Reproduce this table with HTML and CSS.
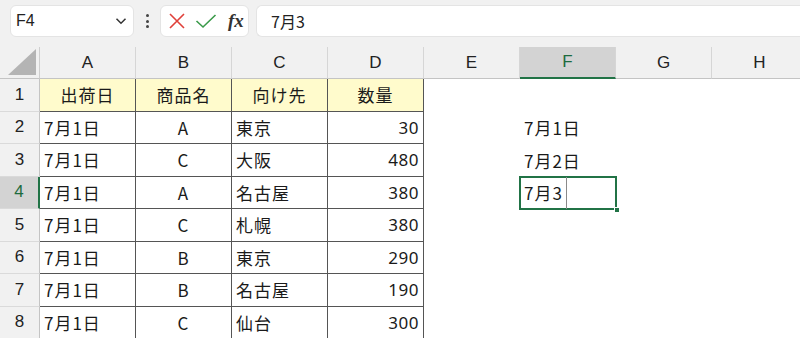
FILE: index.html
```html
<!DOCTYPE html>
<html lang="ja">
<head>
<meta charset="utf-8">
<title>Sheet1</title>
<link rel="stylesheet" href="styles.css">
</head>
<body>
<div class="app">
  <div class="toolbar">
    <div class="namebox">
      <span class="name">F4</span>
      <svg class="chev" width="12" height="8" viewBox="0 0 12 8"><path d="M1.5 1.8 L6 6.2 L10.5 1.8" fill="none" stroke="#333" stroke-width="1.5"/></svg>
    </div>
    <div class="grip"><i></i><i></i><i></i></div>
    <div class="fxbox">
      <svg class="ico" width="18" height="18" viewBox="0 0 18 18"><path d="M2 2 L16 16 M16 2 L2 16" stroke="#e0403a" stroke-width="1.6" fill="none"/></svg>
      <svg class="ico" width="22" height="18" viewBox="0 0 22 18"><path d="M1.5 9 L8 15 L20.5 3" stroke="#3a9a4a" stroke-width="1.6" fill="none"/></svg>
      <span class="fx">fx</span>
    </div>
    <div class="formula">7月3</div>
  </div>

  <div class="sheet">
    <div class="corner"><svg width="28" height="26" viewBox="0 0 28 26"><polygon points="28,0 28,26 0,26" fill="#b4b4b4"/></svg></div>
    <div class="colh">A</div><div class="colh">B</div><div class="colh">C</div><div class="colh">D</div>
    <div class="colh">E</div><div class="colh sel">F</div><div class="colh">G</div><div class="colh">H</div>

    <div class="rowh">1</div>
    <div class="c t head">出荷日</div><div class="c t head">商品名</div><div class="c t head">向け先</div><div class="c t head">数量</div>
    <div class="c"></div><div class="c"></div><div class="c"></div><div class="c"></div>

    <div class="rowh">2</div>
    <div class="c t">7月1日</div><div class="c t mid">A</div><div class="c t">東京</div><div class="c t num">30</div>
    <div class="c"></div><div class="c">7月1日</div><div class="c"></div><div class="c"></div>

    <div class="rowh">3</div>
    <div class="c t">7月1日</div><div class="c t mid">C</div><div class="c t">大阪</div><div class="c t num">480</div>
    <div class="c"></div><div class="c">7月2日</div><div class="c"></div><div class="c"></div>

    <div class="rowh sel">4</div>
    <div class="c t">7月1日</div><div class="c t mid">A</div><div class="c t">名古屋</div><div class="c t num">380</div>
    <div class="c"></div><div class="c active">7月3<span class="caret"></span><span class="handle"></span></div><div class="c"></div><div class="c"></div>

    <div class="rowh">5</div>
    <div class="c t">7月1日</div><div class="c t mid">C</div><div class="c t">札幌</div><div class="c t num">380</div>
    <div class="c"></div><div class="c"></div><div class="c"></div><div class="c"></div>

    <div class="rowh">6</div>
    <div class="c t">7月1日</div><div class="c t mid">B</div><div class="c t">東京</div><div class="c t num">290</div>
    <div class="c"></div><div class="c"></div><div class="c"></div><div class="c"></div>

    <div class="rowh">7</div>
    <div class="c t">7月1日</div><div class="c t mid">B</div><div class="c t">名古屋</div><div class="c t num">190</div>
    <div class="c"></div><div class="c"></div><div class="c"></div><div class="c"></div>

    <div class="rowh">8</div>
    <div class="c t">7月1日</div><div class="c t mid">C</div><div class="c t">仙台</div><div class="c t num">300</div>
    <div class="c"></div><div class="c"></div><div class="c"></div><div class="c"></div>
  </div>
</div>
</body>
</html>
```

FILE: styles.css
```css
* { box-sizing: border-box; }

html, body {
  margin: 0;
  padding: 0;
  width: 800px;
  height: 338px;
  overflow: hidden;
  background: #fff;
}

.app {
  width: 800px;
  height: 338px;
  overflow: hidden;
  font-family: "Noto Sans CJK JP", "Noto Sans", sans-serif;
  color: #1a1a1a;
}

/* formula bar strip */
.toolbar {
  height: 47px;
  background: #f1f1f1;
  display: flex;
  align-items: flex-start;
  padding: 5px 0 0 10px;
}

.namebox {
  width: 124px;
  height: 32px;
  background: #fff;
  border: 1px solid #e4e4e4;
  border-radius: 6px;
  display: flex;
  align-items: center;
  justify-content: space-between;
  padding: 0 6px 0 5px;
}

.name {
  font-family: "Liberation Sans", Arial, sans-serif;
  font-size: 16px;
  color: #222;
}

.grip {
  width: 26px;
  height: 32px;
  display: flex;
  flex-direction: column;
  align-items: center;
  justify-content: center;
  gap: 2.5px;
}

.grip i {
  display: block;
  width: 3px;
  height: 3px;
  border-radius: 50%;
  background: #444;
}

.fxbox {
  width: 89px;
  height: 32px;
  background: #fff;
  border: 1px solid #e4e4e4;
  border-radius: 6px;
  display: flex;
  align-items: center;
  padding: 0 0 0 7px;
  gap: 9px;
}

.fx {
  font-family: "Liberation Serif", "Times New Roman", serif;
  font-style: italic;
  font-weight: bold;
  font-size: 19px;
  color: #333;
  margin-left: 2px;
}

.formula {
  flex: 1;
  margin-left: 7px;
  height: 32px;
  background: #fff;
  border: 1px solid #e4e4e4;
  border-right: none;
  border-radius: 6px 0 0 6px;
  display: flex;
  align-items: center;
  padding-left: 14px;
  font-size: 16px;
  color: #222;
}

/* grid */
.sheet {
  display: grid;
  grid-template-columns: 40px repeat(8, 96px);
  grid-template-rows: 32px repeat(8, 32.5px);
  width: 808px;
}

.corner {
  background: #f1f1f1;
  border-right: 1px solid #cfcfcf;
  border-bottom: 1px solid #c4c4c4;
  display: flex;
  align-items: flex-end;
  justify-content: flex-end;
  padding: 0 3px 3px 0;
}

.colh {
  background: #f1f1f1;
  border-right: 1px solid #d6d6d6;
  border-bottom: 1px solid #c4c4c4;
  display: flex;
  align-items: center;
  justify-content: center;
  font-family: "Liberation Sans", Arial, sans-serif;
  font-size: 17px;
  color: #222;
}

.colh.sel {
  background: #d3d3d3;
  color: #1d6b3e;
  border-bottom: 2px solid #217346;
}

.rowh {
  background: #f1f1f1;
  border-right: 1px solid #c4c4c4;
  border-bottom: 1px solid #dadada;
  display: flex;
  align-items: center;
  justify-content: center;
  font-family: "Liberation Sans", Arial, sans-serif;
  font-size: 17px;
  color: #222;
}

.rowh.sel {
  background: #d3d3d3;
  color: #1d6b3e;
  border-right: 2px solid #217346;
}

.c {
  position: relative;
  display: flex;
  align-items: center;
  padding: 0 4px;
  font-size: 17px;
  letter-spacing: 1px;
  white-space: nowrap;
  color: #1a1a1a;
}

/* bordered table block A1:D8 */
.c.t {
  border-right: 1px solid #555;
  border-bottom: 1px solid #555;
}

.c.head {
  background: #fffbcc;
  justify-content: center;
}

.c.mid { justify-content: center; }
.c.num { justify-content: flex-end; font-family: "Noto Sans", sans-serif; letter-spacing: 0.5px; }

.c.active::before {
  content: "";
  position: absolute;
  left: -1px;
  top: -1px;
  right: -1px;
  bottom: -1px;
  border: 2px solid #217346;
}

.caret {
  position: absolute;
  left: 46px;
  top: 0;
  bottom: 0;
  width: 1px;
  background: #8a8a8a;
}

.handle {
  position: absolute;
  right: -4px;
  bottom: -4px;
  width: 6px;
  height: 6px;
  background: #217346;
  border: 1px solid #fff;
}
```
